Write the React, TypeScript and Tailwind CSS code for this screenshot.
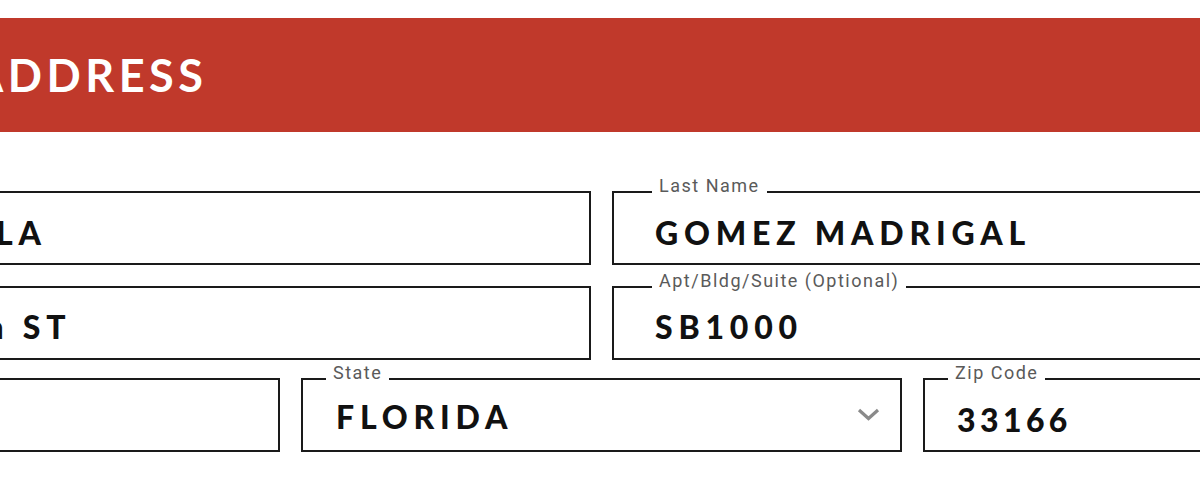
import React from "react";

const valueFont = "font-['Lato','Open_Sans',sans-serif] font-black text-[32px] leading-[32px] text-[#111] whitespace-nowrap";
const labelFont = "font-['Roboto','Noto_Sans',sans-serif] text-[18px] leading-[18px] tracking-[1.5px] text-[#5a5a5a] whitespace-nowrap";

function Field({
  label,
  value,
  labelPos,
  valuePad,
  tracking = "tracking-[5.8px]",
  chevron,
}: {
  label: string;
  value: string;
  labelPos: string;
  valuePad: string;
  tracking?: string;
  chevron?: boolean;
}) {
  return (
    <div className={"relative h-[74px] border-2 border-[#1a1a1a] flex items-start " + valuePad}>
      <span className={"absolute top-[-16px] bg-white px-[7px] " + labelPos + " " + labelFont}>{label}</span>
      <span className={valueFont + " " + tracking}>{value}</span>
      {chevron && (
        <svg className="ml-auto mr-[20px] mt-[7px]" width="23" height="13" viewBox="0 0 23 13" fill="none">
          <polyline points="2,2 11.5,10.5 21,2" stroke="#8a8a8a" strokeWidth="3.2" />
        </svg>
      )}
    </div>
  );
}

export default function App() {
  return (
    <div className="w-[1200px] h-[480px] overflow-hidden bg-white">
      <div className="ml-[-321px] w-[1845px] pt-[18px]">
        <div className="h-[114px] bg-[#c0392b] flex items-center pl-[34px]">
          <span className="font-['Lato','Open_Sans',sans-serif] font-bold text-[45px] leading-[45px] tracking-[4.5px] text-white whitespace-nowrap">
            SHIPPING ADDRESS
          </span>
        </div>
        <div className="mt-[59px] grid grid-cols-2 gap-x-[21px]">
          <Field label="First Name" value="MARIA DANIELA" labelPos="left-[38px]" valuePad="pl-[40px] pt-[24px]" />
          <Field label="Last Name" value="GOMEZ MADRIGAL" labelPos="left-[38px]" valuePad="pl-[41px] pt-[24px]" />
        </div>
        <div className="mt-[21px] grid grid-cols-2 gap-x-[21px]">
          <Field label="Street Address" value="1050 NW Main ST" labelPos="left-[38px]" valuePad="pl-[38px] pt-[23px]" />
          <Field label="Apt/Bldg/Suite (Optional)" value="SB1000" labelPos="left-[38px]" valuePad="pl-[41px] pt-[23px]" />
        </div>
        <div className="mt-[18px] grid grid-cols-3 gap-x-[21px]">
          <Field label="City" value="MIAMI" labelPos="left-[23px]" valuePad="pl-[33px] pt-[24px]" />
          <Field label="State" value="FLORIDA" labelPos="left-[23px]" valuePad="pl-[33px] pt-[21px]" chevron />
          <Field label="Zip Code" value="33166" labelPos="left-[23px]" valuePad="pl-[32px] pt-[24px]" tracking="tracking-[4.4px]" />
        </div>
      </div>
    </div>
  );
}
